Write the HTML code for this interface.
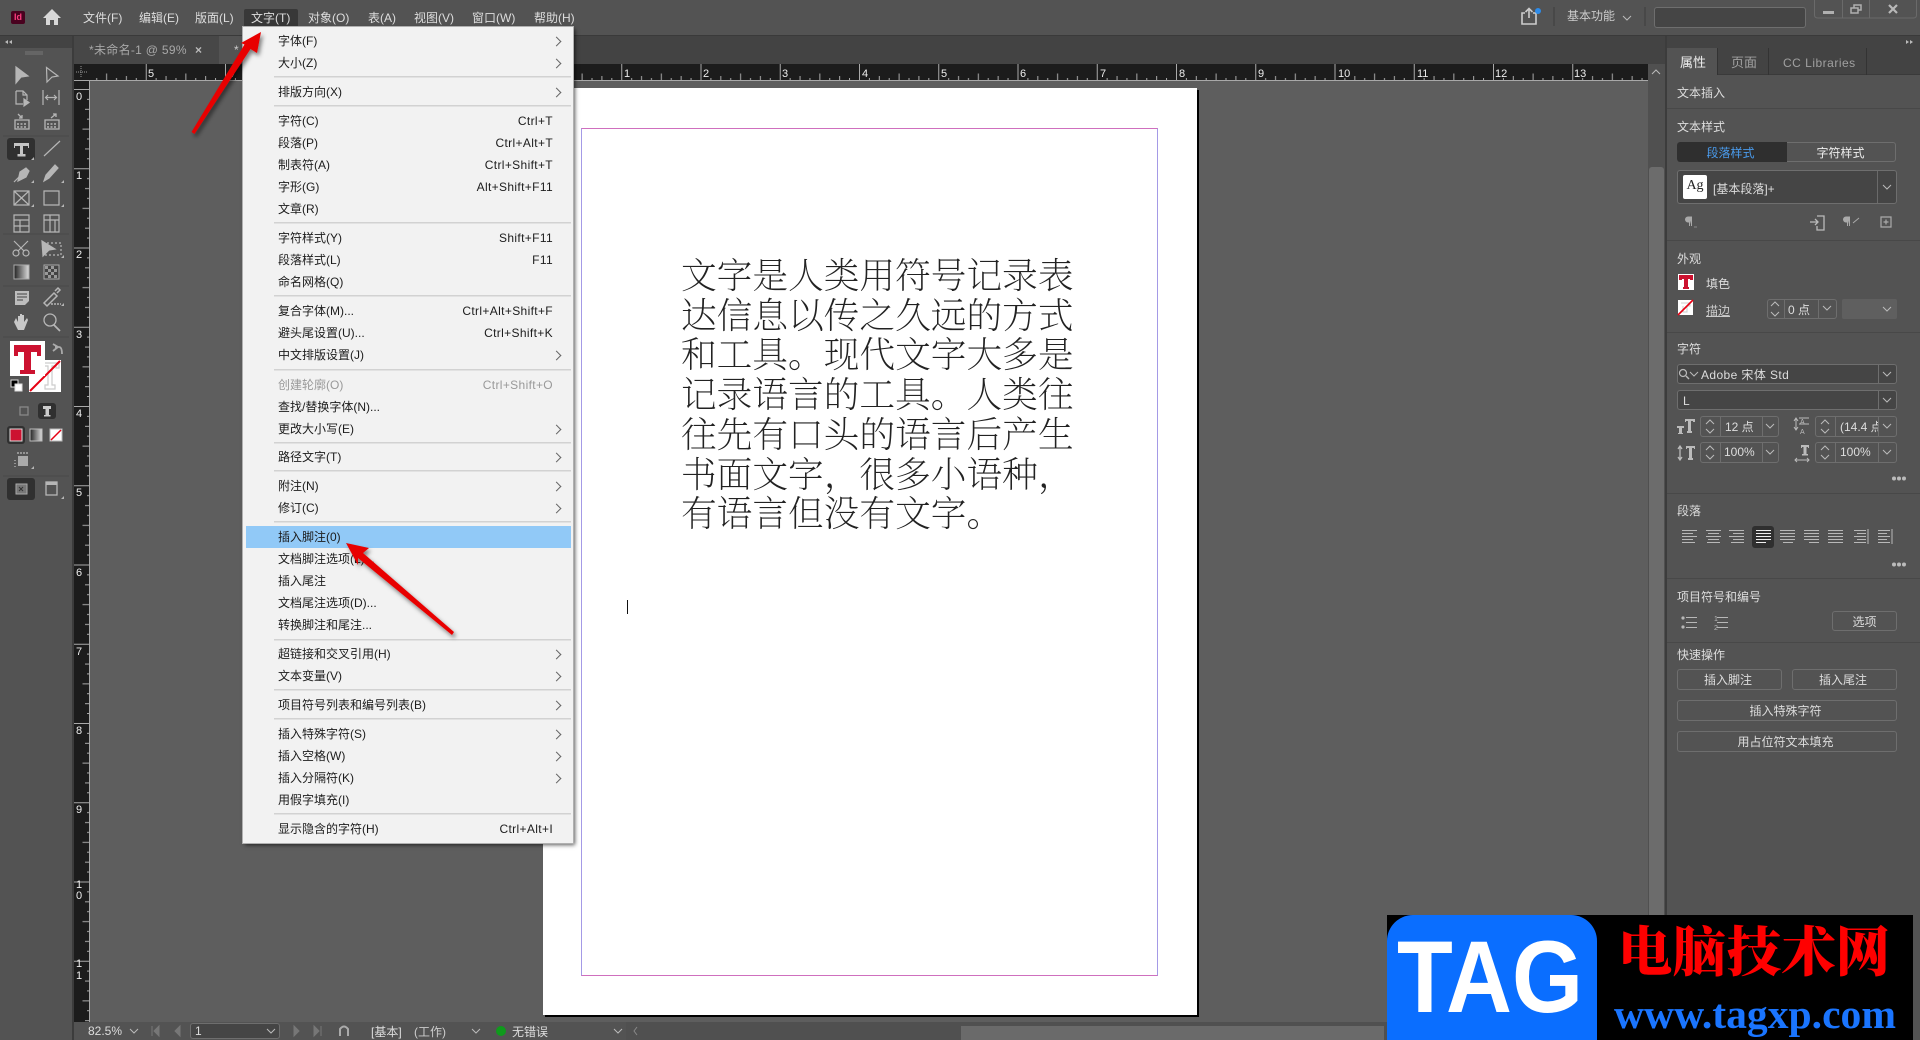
<!DOCTYPE html>
<html lang="zh-CN"><head><meta charset="utf-8"><title>InDesign</title>
<style>
html,body{margin:0;padding:0;width:1920px;height:1040px;overflow:hidden;background:#5e5e5e}
body{position:relative;font:12px/18px "Liberation Sans","Noto Sans CJK SC",sans-serif;color:#ddd}
.a{position:absolute;white-space:nowrap}
.t{position:absolute;white-space:nowrap;line-height:18px}
#menu{position:absolute;left:243px;top:27px;width:330px;height:816px;background:#f2f2f2;box-shadow:2px 2px 4px rgba(0,0,0,.65);outline:1px solid #b0b0b0;color:#1c1c1c}
#menu .m{position:absolute;left:35px;white-space:nowrap;line-height:18px}
#menu .k{position:absolute;right:20px;white-space:nowrap;line-height:18px;letter-spacing:.35px}
#menu .s{position:absolute;left:31px;width:297px;height:1px;background:#d2d2d2;border-bottom:1px solid #e2e2e2}
#menu .r{position:absolute;left:310px;width:6px;height:6px;border-top:1px solid #666;border-right:1px solid #666;transform:rotate(45deg)}
.d{color:#999!important}
.bx{position:absolute;box-sizing:border-box;border:1px solid #6e6e6e;border-radius:3px}
.btn{position:absolute;box-sizing:border-box;border:1px solid #6e6e6e;border-radius:3px;text-align:center;line-height:20px;padding-left:0;color:#ddd}
.sep{position:absolute;left:1667px;width:253px;height:1px;background:#484848}
.body{font-family:"Noto Serif CJK SC",serif;font-weight:200;font-size:35.7px;line-height:39.7px;color:#222}
</style></head><body>

<!-- top bar -->
<div class="a" style="left:0;top:0;width:1920px;height:35px;background:#535353"></div>
<div class="a" style="left:0;top:35px;width:1920px;height:1px;background:#3a3a3a"></div>
<div class="a" style="left:11px;top:11px;width:14px;height:13px;background:#49021f;border-radius:2px;color:#ff3d7f;font:bold 9px/13px 'Liberation Sans',sans-serif;text-align:center">Id</div>
<div class="a" style="left:244px;top:9px;width:54px;height:18px;background:#383838;border-radius:2px 2px 0 0"></div>
<span class="t" style="left:83px;top:9px">文件(F)</span>
<span class="t" style="left:139px;top:9px">编辑(E)</span>
<span class="t" style="left:195px;top:9px">版面(L)</span>
<span class="t" style="left:251px;top:9px">文字(T)</span>
<span class="t" style="left:308px;top:9px">对象(O)</span>
<span class="t" style="left:368px;top:9px">表(A)</span>
<span class="t" style="left:414px;top:9px">视图(V)</span>
<span class="t" style="left:472px;top:9px">窗口(W)</span>
<span class="t" style="left:534px;top:9px">帮助(H)</span>
<span class="t" style="left:1567px;top:7px;color:#ccc">基本功能</span>
<div class="bx" style="left:1654px;top:7px;width:152px;height:21px;background:#454545"></div>

<!-- tab bar -->
<div class="a" style="left:73px;top:36px;width:1593px;height:28px;background:#434343"></div>
<div class="a" style="left:73px;top:36px;width:146px;height:28px;background:#474747"></div>
<div class="a" style="left:219px;top:36px;width:60px;height:28px;background:#535353"></div>
<span class="t" style="left:89px;top:41px;color:#a8a8a8;letter-spacing:.3px">*未命名-1 @ 59%</span>
<span class="t" style="left:195px;top:41px;color:#bbb;font-weight:bold">×</span>
<span class="t" style="left:234px;top:41px;color:#ccc">*</span>

<!-- left panel -->
<div class="a" style="left:0;top:36px;width:72px;height:1004px;background:#535353"></div>
<div class="a" style="left:0;top:36px;width:72px;height:12px;background:#434343"></div>
<div class="a" style="left:72px;top:36px;width:2px;height:1004px;background:#3c3c3c"></div>
<div class="a" style="left:7px;top:138px;width:28px;height:22px;background:#303030;border-radius:3px"></div>
<div class="a" style="left:7px;top:426px;width:18px;height:18px;background:#303030;border-radius:3px"></div>
<div class="a" style="left:7px;top:478px;width:28px;height:22px;background:#303030;border-radius:3px"></div>
<div class="a" style="left:38px;top:403px;width:18px;height:16px;background:#303030;border-radius:3px"></div>

<!-- scrollbars -->
<div class="a" style="left:1648px;top:64px;width:17px;height:976px;background:#505050"></div>
<div class="a" style="left:1649px;top:167px;width:15px;height:778px;background:#6c6c6c;border-radius:3px 3px 0 0"></div>
<div class="a" style="left:1665px;top:36px;width:2px;height:1004px;background:#3c3c3c"></div>

<!-- page -->
<div class="a" style="left:543px;top:88px;width:654px;height:927px;background:#fff;box-shadow:2px 2px 0 #000"></div>
<div class="a" style="left:581px;top:128px;width:577px;height:848px;box-sizing:border-box;border-top:1px solid #cf6fbe;border-bottom:1px solid #cf6fbe;border-left:1px solid #a49ae6;border-right:1px solid #a49ae6"></div>
<div class="a body" style="left:681px;top:254px;width:400px">
文字是人类用符号记录表<br>达信息以传之久远的方式<br>和工具。现代文字大多是<br>记录语言的工具。人类往<br>往先有口头的语言后产生<br>书面文字，很多小语种，<br>有语言但没有文字。
</div>
<div class="a" style="left:627px;top:600px;width:1px;height:14px;background:#111"></div>

<!-- status bar -->
<div class="a" style="left:74px;top:1022px;width:1591px;height:18px;background:#535353"></div>
<div class="a" style="left:626px;top:1022px;width:1039px;height:18px;background:#505050"></div>
<div class="a" style="left:961px;top:1026px;width:423px;height:14px;background:#6a6a6a"></div>
<div class="bx" style="left:190px;top:1023px;width:90px;height:16px;background:#454545"></div>
<span class="t" style="left:88px;top:1022px">82.5%</span>
<span class="t" style="left:195px;top:1022px">1</span>
<span class="t" style="left:371px;top:1023px">[基本]</span>
<span class="t" style="left:414px;top:1023px;color:#ccc">(工作)</span>
<span class="t" style="left:512px;top:1023px">无错误</span>

<!-- right panel -->
<div class="a" style="left:1667px;top:36px;width:253px;height:1004px;background:#535353"></div>
<div class="a" style="left:1667px;top:36px;width:253px;height:12px;background:#434343"></div>
<div class="a" style="left:1667px;top:48px;width:253px;height:27px;background:#434343;border-bottom:1px solid #3a3a3a;box-sizing:border-box"></div>
<div class="a" style="left:1667px;top:48px;width:51px;height:27px;background:#535353;border-right:1px solid #333;box-sizing:border-box"></div>
<div class="a" style="left:1768px;top:48px;width:1px;height:27px;background:#333"></div>
<div class="a" style="left:1866px;top:48px;width:1px;height:27px;background:#333"></div>
<span class="t" style="left:1680px;top:54px;font-size:13px;color:#eee">属性</span>
<span class="t" style="left:1731px;top:54px;font-size:13px;color:#a0a0a0">页面</span>
<span class="t" style="left:1783px;top:54px;color:#a0a0a0;letter-spacing:.5px">CC Libraries</span>
<span class="t" style="left:1677px;top:84px">文本插入</span>
<div class="sep" style="top:108px"></div>
<span class="t" style="left:1677px;top:118px">文本样式</span>
<div class="bx" style="left:1677px;top:142px;width:219px;height:20px"></div>
<div class="a" style="left:1677px;top:142px;width:110px;height:20px;background:#2f2f2f;border-radius:3px 0 0 3px;text-align:center;line-height:22px;color:#4a9bec;text-indent:-3px">段落样式</div>
<div class="a" style="left:1787px;top:142px;width:109px;text-align:center;line-height:22px;color:#eee;text-indent:-2px">字符样式</div>
<div class="bx" style="left:1677px;top:170px;width:220px;height:34px;background:#454545"></div>
<div class="a" style="left:1877px;top:171px;width:1px;height:32px;background:#6a6a6a"></div>
<div class="a" style="left:1683px;top:175px;width:24px;height:24px;background:#fff;border-radius:2px;color:#222;font:14px/22px 'Liberation Serif',serif;text-align:center">Ag</div>
<span class="t" style="left:1713px;top:180px">[基本段落]+</span>
<div class="sep" style="top:240px"></div>
<span class="t" style="left:1677px;top:250px">外观</span>
<span class="t" style="left:1706px;top:275px">填色</span>
<span class="t" style="left:1706px;top:302px;text-decoration:underline;color:#ccc">描边</span>
<div class="bx" style="left:1767px;top:299px;width:70px;height:20px"></div>
<div class="a" style="left:1784px;top:300px;width:1px;height:18px;background:#6e6e6e"></div>
<div class="a" style="left:1818px;top:300px;width:1px;height:18px;background:#6e6e6e"></div>
<span class="t" style="left:1788px;top:301px">0 点</span>
<div class="a" style="left:1842px;top:299px;width:55px;height:20px;background:#5f5f5f;border-radius:2px"></div>
<div class="sep" style="top:332px"></div>
<span class="t" style="left:1677px;top:340px">字符</span>
<div class="bx" style="left:1677px;top:364px;width:220px;height:20px;background:#454545"></div>
<div class="a" style="left:1878px;top:365px;width:1px;height:18px;background:#6e6e6e"></div>
<span class="t" style="left:1701px;top:366px;letter-spacing:.4px">Adobe 宋体 Std</span>
<div class="bx" style="left:1677px;top:390px;width:220px;height:20px;background:#454545"></div>
<div class="a" style="left:1878px;top:391px;width:1px;height:18px;background:#6e6e6e"></div>
<span class="t" style="left:1683px;top:392px">L</span>
<div class="bx" style="left:1700px;top:416px;width:79px;height:21px"></div>
<div class="a" style="left:1720px;top:417px;width:1px;height:19px;background:#6e6e6e"></div>
<div class="a" style="left:1762px;top:417px;width:1px;height:19px;background:#6e6e6e"></div>
<span class="t" style="left:1725px;top:418px">12 点</span>
<div class="bx" style="left:1815px;top:416px;width:82px;height:21px"></div>
<div class="a" style="left:1835px;top:417px;width:1px;height:19px;background:#6e6e6e"></div>
<div class="a" style="left:1878px;top:417px;width:1px;height:19px;background:#6e6e6e"></div>
<span class="t" style="left:1840px;top:418px;width:38px;overflow:hidden">(14.4 点)</span>
<div class="bx" style="left:1700px;top:442px;width:79px;height:21px"></div>
<div class="a" style="left:1720px;top:443px;width:1px;height:19px;background:#6e6e6e"></div>
<div class="a" style="left:1762px;top:443px;width:1px;height:19px;background:#6e6e6e"></div>
<span class="t" style="left:1724px;top:443px">100%</span>
<div class="bx" style="left:1815px;top:442px;width:82px;height:21px"></div>
<div class="a" style="left:1835px;top:443px;width:1px;height:19px;background:#6e6e6e"></div>
<div class="a" style="left:1878px;top:443px;width:1px;height:19px;background:#6e6e6e"></div>
<span class="t" style="left:1840px;top:443px">100%</span>
<div class="sep" style="top:493px"></div>
<span class="t" style="left:1677px;top:502px">段落</span>
<div class="a" style="left:1752px;top:526px;width:22px;height:22px;background:#2f2f2f;border-radius:3px"></div>
<div class="sep" style="top:578px"></div>
<span class="t" style="left:1677px;top:588px">项目符号和编号</span>
<div class="btn" style="left:1832px;top:611px;width:65px;height:20px">选项</div>
<div class="sep" style="top:642px"></div>
<span class="t" style="left:1677px;top:646px">快速操作</span>
<div class="btn" style="left:1677px;top:669px;width:105px;height:21px;text-indent:-3px">插入脚注</div>
<div class="btn" style="left:1792px;top:669px;width:105px;height:21px;text-indent:-3px">插入尾注</div>
<div class="btn" style="left:1677px;top:700px;width:220px;height:21px;text-indent:-3px">插入特殊字符</div>
<div class="btn" style="left:1677px;top:731px;width:220px;height:21px;text-indent:-3px">用占位符文本填充</div>

<!-- icon + ruler layer -->
<svg class="a" style="left:0;top:0" width="1920" height="1040" viewBox="0 0 1920 1040" font-family="Liberation Sans,sans-serif">
<defs>
<path id="cv" d="M-4-2L0 2L4-2" fill="none" stroke="#bbb" stroke-width="1"/>
<path id="cu" d="M-4 2L0-2L4 2" fill="none" stroke="#bbb" stroke-width="1"/>
<pattern id="pt" patternUnits="userSpaceOnUse" width="79.25" height="16" x="542" y="64">
<path d="M.5 0V16M10.4 14V16M20.3 12V16M30.2 14V16M40.1 9.500V16M50 14V16M59.9 12V16M69.8 14V16" stroke="#aaa" stroke-width="1" fill="none"/>
</pattern>
<pattern id="pl" patternUnits="userSpaceOnUse" width="15" height="79.25" x="74" y="89">
<path d="M0 .5H15M13 10.400H15M11 20.300H15M13 30.200H15M8.500 40.100H15M13 50H15M11 59.900H15M13 69.800H15" stroke="#aaa" stroke-width="1" fill="none"/>
</pattern>
</defs>

<!-- rulers -->
<rect x="74" y="64" width="1574" height="16" fill="#1c1c1c"/>
<rect x="89" y="64" width="1559" height="16" fill="url(#pt)"/>
<rect x="74" y="80" width="1574" height="1" fill="#a8a8a8"/>
<rect x="74" y="81" width="15" height="941" fill="#1c1c1c"/>
<rect x="74" y="81" width="15" height="941" fill="url(#pl)"/>
<rect x="89" y="81" width="1" height="941" fill="#a8a8a8"/>
<path d="M81 66V78M76 72H88" stroke="#999" stroke-dasharray="1 1" fill="none"/>
<g fill="#eee" font-size="11">
<text x="148" y="77">5</text><text x="228" y="77">4</text>
<text x="624" y="77">1</text><text x="703" y="77">2</text><text x="782" y="77">3</text><text x="862" y="77">4</text><text x="941" y="77">5</text><text x="1020" y="77">6</text><text x="1100" y="77">7</text><text x="1179" y="77">8</text><text x="1258" y="77">9</text><text x="1338" y="77">10</text><text x="1417" y="77">11</text><text x="1495" y="77">12</text><text x="1574" y="77">13</text>
<text x="76" y="100">0</text><text x="76" y="179">1</text><text x="76" y="258">2</text><text x="76" y="338">3</text><text x="76" y="417">4</text><text x="76" y="496">5</text><text x="76" y="576">6</text><text x="76" y="655">7</text><text x="76" y="734">8</text><text x="76" y="813">9</text>
<text x="76" y="888">1</text><text x="76" y="899">0</text><text x="76" y="967">1</text><text x="76" y="979">1</text>
</g>

<!-- home / share / window -->
<path d="M52 9L61 18H58V25H54V20H50V25H46V18H43Z" fill="#d8d8d8"/>
<path d="M1525 13H1522V24H1536V13H1533M1529 18V9M1525.500 12L1529 8.500L1532.500 12" fill="none" stroke="#ccc" stroke-width="1.600"/>
<circle cx="1538" cy="11" r="3" fill="#2d8ceb"/>
<rect x="1553" y="7" width="2" height="19" fill="#484848"/><rect x="1644" y="7" width="2" height="19" fill="#484848"/>
<use href="#cv" x="1627" y="18"/>
<path d="M1814.500 0V15Q1814.500 18 1818 18H1913.500Q1916.500 18 1916.500 15V0M1842.500 0V18M1869.500 0V18" fill="none" stroke="#6a6a6a"/>
<rect x="1823" y="11" width="11" height="3" fill="#b0b0b0"/>
<path d="M1851 8H1858V13H1851ZM1854 8V5H1861V10H1858" fill="none" stroke="#b0b0b0" stroke-width="1.500"/>
<path d="M1889 5L1897 13M1897 5L1889 13" stroke="#b8b8b8" stroke-width="2.200" fill="none"/>

<!-- panel grips -->
<path d="M8 40L5 42L8 44ZM12 40L9 42L12 44Z" fill="#bbb"/>
<path d="M1906 40L1909 42L1906 44ZM1910 40L1913 42L1910 44Z" fill="#bbb"/>
<path d="M26 51V55M28 51V55M30 51V55M32 51V55M34 51V55M36 51V55M38 51V55M40 51V55M42 51V55" stroke="#777"/>

<!-- tools -->
<g fill="none" stroke="#b6b6b6" stroke-width="1.200">
<path d="M16 67L28 76L21 77L16 83Z" fill="#b6b6b6"/>
<path d="M46.500 67.500L58 76L52 77L47 82Z"/>
<path d="M16 91H23L27 95V100M16 91V104H23M23 91V95H27"/><path d="M24 99L29 102.500L24 106Z" fill="#b6b6b6"/>
<path d="M43 90V105M59 90V105M46 97.500H56M48 95L45.500 97.500L48 100M54 95L56.500 97.500L54 100"/>
<path d="M15 120H29V129H15ZM18 114L22 118M22 115V118H19" stroke-width="1.300"/><path d="M17 124H27M17 127H27" stroke-dasharray="2 1.500" stroke-width="1.500"/>
<path d="M45 120H59V129H45ZM51 118L56 114M53 114H56V117" stroke-width="1.300"/><path d="M47 124H57M47 127H57" stroke-dasharray="2 1.500" stroke-width="1.500"/>
<path d="M44 156L60 141"/>
<path d="M18 181L20 172L26 168L29 171L26 177Z" fill="#b6b6b6"/><path d="M14 182L19 177"/>
<path d="M44 181L46 175L55 165L58 168L49 178Z" fill="#b6b6b6"/>
<path d="M14 191H29V205H14ZM14 191L29 205M29 191L14 205"/>
<path d="M44 191H59V205H44Z"/>
<path d="M14 215H29V232H14ZM14 220H29M14 226H29M20 220V232"/>
<path d="M44 215H59V232H44ZM44 220H59M50 215V232M55 220V232"/>
<circle cx="16" cy="253" r="3"/><circle cx="26" cy="253" r="3"/><path d="M14 241L24 251M28 241L18 251"/>
<path d="M43 243H61V255H43" stroke-dasharray="2 2"/><path d="M42 241L55 249L49 250L43 256Z" fill="#b6b6b6"/>
</g>
<path d="M14 143H29V148H28V146H23V154H25.500V156.500H17.500V154H20V146H15V148H14Z" fill="#c4c4c4"/>
<defs><linearGradient id="g1"><stop offset="0" stop-color="#222"/><stop offset="1" stop-color="#ddd"/></linearGradient></defs>
<rect x="14" y="265" width="15" height="14" fill="url(#g1)" stroke="#aaa"/>
<rect x="44" y="265" width="15" height="14" fill="#444" stroke="#aaa"/>
<path d="M45 266h3v3h-3zM51 266h3v3h-3zM48 269h3v3h-3zM54 269h3v3h-3zM45 272h3v3h-3zM51 272h3v3h-3zM48 275h3v3h-3zM54 275h3v3h-3z" fill="#999"/>
<path d="M15 291H29V301L25 305H15Z" fill="#bdbdbd"/><path d="M17 294H27M17 297H27M17 300H23" stroke="#444"/>
<path d="M44 303L54 293L57 296L47 306ZM55 291L58 288L60 290L57 293" fill="none" stroke="#b6b6b6" stroke-width="1.500"/><path d="M51 304H61" stroke="#b6b6b6" stroke-width="1.500" stroke-dasharray="2 1"/>
<path d="M14 322L16 318L18 322V316H20V321V314H22V321V315H24V322L27 318L28 320L24 330H18Z" fill="#c8c8c8"/>
<circle cx="50" cy="320" r="6" fill="none" stroke="#b6b6b6" stroke-width="1.300"/><path d="M54 325L60 331" stroke="#b6b6b6" stroke-width="1.800"/>
<path d="M34 160V157L31 160ZM34 183V180L31 183ZM64 183V180L61 183ZM34 207V204L31 207ZM64 207V204L61 207ZM64 258V255L61 258ZM64 306V303L61 306ZM34 469V466L31 469ZM64 499V496L61 499Z" fill="#b6b6b6"/>
<!-- stroke swatch below fill swatch -->
<rect x="29" y="360" width="32" height="32" fill="#fff"/>
<path d="M41 363H59V368H56V366H52V385H55V389H45V385H48V366H44V368H41Z" fill="none" stroke="#ccc" stroke-width="1.200"/>
<path d="M30 391L60 361" stroke="#e60012" stroke-width="2"/>
<rect x="10" y="341" width="35" height="35" fill="#fff"/>
<path d="M14 345H41V356H37V352H31V370H35V374H20V370H24V352H18V356H14Z" fill="#cc1230"/>
<path d="M56 342L61 345L56 349M58 345H62Q65 345 65 352" fill="none" stroke="#aaa" stroke-width="1.800" transform="translate(-3 2)"/>
<rect x="11" y="380" width="7" height="7" fill="#000" stroke="#ddd"/><rect x="15" y="384" width="7" height="7" fill="#fff" stroke="#ddd"/>
<rect x="20" y="407" width="8" height="8" fill="none" stroke="#888" stroke-width="1.300"/>
<path d="M43 406H51V409H49V415H50.500V416.500H44V415H45.500V409H43Z" fill="#ccc"/>
<rect x="10" y="429" width="12" height="12" fill="#cc1230" stroke="#ddd"/>
<rect x="30" y="429" width="12" height="12" fill="url(#g1)" stroke="#bbb"/>
<rect x="50" y="429" width="12" height="12" fill="#fff" stroke="#bbb"/><path d="M51 440L61 430" stroke="#e60012" stroke-width="1.500"/>
<rect x="18" y="456" width="10" height="10" fill="#aaa"/><path d="M15 460V461M15 463V464M15 466V467M18 452V454M21 452V454M24 452V454M27 452V454" stroke="#aaa" stroke-width="1.500"/>
<rect x="16" y="484" width="11" height="10" fill="#777" stroke="#aaa"/><path d="M19 487L23 491M23 487L19 491" stroke="#333"/>
<rect x="46" y="482" width="11" height="13" fill="none" stroke="#b6b6b6" stroke-width="1.300"/><rect x="46" y="482" width="11" height="3" fill="#b6b6b6"/>
<path d="M3 136H69M3 234H69M3 286H69M3 337H69M3 476H69" stroke="#484848"/>

<!-- status icons -->
<use href="#cv" x="134" y="1031"/><use href="#cv" x="271" y="1031"/><use href="#cv" x="476" y="1031"/><use href="#cv" x="618" y="1031"/>
<path d="M152 1026V1036M159 1026L154 1031L159 1036ZM180 1026L175 1031L180 1036Z" fill="#777" stroke="#777"/>
<path d="M294 1026L299 1031L294 1036ZM314 1026L319 1031L314 1036ZM321 1026V1036" fill="#777" stroke="#777"/>
<path d="M340 1036V1029Q344 1024 348 1029V1036" fill="none" stroke="#aaa" stroke-width="2"/>
<circle cx="501" cy="1031" r="5" fill="#0f9a1c"/>
<path d="M637 1027L634 1031L637 1035" stroke="#888" fill="none"/>
<use href="#cu" x="1656" y="72"/>

<!-- right panel icons -->
<use href="#cv" x="1887" y="187"/>
<path d="M1692 217H1688A2.500 2.500 0 0 0 1688 222H1689.500V226M1691.500 217V226" fill="#aaa" stroke="#aaa"/>
<path d="M1694 227H1697" stroke="#888"/>
<path d="M1810 222H1818M1815 219L1818 222L1815 225M1817 216H1824V230H1817V226" fill="none" stroke="#bbb" stroke-width="1.300"/>
<path d="M1850 217H1846A2.500 2.500 0 0 0 1846 222H1847.500V226M1849.500 217V226" fill="#aaa" stroke="#aaa"/><path d="M1853 223L1859 218" stroke="#aaa"/>
<path d="M1881 217H1891V227H1881ZM1883.500 222H1888.500M1886 219.500V224.500" fill="none" stroke="#aaa" stroke-width="1.200"/>
<rect x="1678" y="274" width="16" height="16" fill="#fff"/><path d="M1679 275H1693V280H1690V279H1688V287H1689V289H1683V287H1684V279H1682V280H1679Z" fill="#cc1230"/>
<rect x="1678" y="300" width="15" height="15" fill="#fff"/><path d="M1681 303H1690V306H1687V312H1683V306" fill="none" stroke="#ccc"/><path d="M1678 315L1693 300" stroke="#e60012" stroke-width="1.600"/>
<use href="#cu" x="1775" y="304"/><use href="#cv" x="1775" y="314"/><use href="#cv" x="1827" y="308"/><use href="#cv" x="1887" y="309"/>
<use href="#cv" x="1887" y="374"/><use href="#cv" x="1887" y="400"/>
<circle cx="1683" cy="373" r="3.500" fill="none" stroke="#bbb" stroke-width="1.200"/><path d="M1686 376L1689 379" stroke="#bbb" stroke-width="1.400"/><use href="#cv" x="1694" y="374"/>
<use href="#cu" x="1710" y="422"/><use href="#cv" x="1710" y="431"/><use href="#cv" x="1770" y="426"/>
<use href="#cu" x="1825" y="422"/><use href="#cv" x="1825" y="431"/><use href="#cv" x="1887" y="426"/>
<use href="#cu" x="1710" y="448"/><use href="#cv" x="1710" y="457"/><use href="#cv" x="1770" y="452"/>
<use href="#cu" x="1825" y="448"/><use href="#cv" x="1825" y="457"/><use href="#cv" x="1887" y="452"/>
<g fill="#bbb">
<path d="M1677 426H1684V428H1682V433H1683V434H1678V433H1679V428H1677ZM1685 419H1695V422H1693V421H1691V431H1692V433H1687V431H1688V421H1686V422H1685Z"/>
<path d="M1686 446H1695V449H1694V448H1692V458H1693V460H1688V458H1689V448H1687V449H1686Z"/>
<path d="M1680 447V459M1678 449L1680 446L1682 449M1678 457L1680 460L1682 457" fill="none" stroke="#bbb" stroke-width="1.300"/>
<path d="M1801 445H1809V448H1808V447H1806.500V454H1808V455.500H1802V454H1803.500V447H1802V448H1801Z"/>
<path d="M1795 460H1809M1797 458L1795 460L1797 462M1807 458L1809 460L1807 462" fill="none" stroke="#bbb"/>
<path d="M1796 419V429M1794 421L1796 418L1798 421M1794 427L1796 430L1798 427" fill="none" stroke="#bbb"/>
<path d="M1799 418H1809M1799 424H1809" fill="none" stroke="#bbb"/>
</g>
<text x="1800" y="424" font-size="7" fill="#bbb">A</text><text x="1800" y="434" font-size="7" fill="#bbb">A</text>
<g fill="#bbb"><circle cx="1894" cy="478.500" r="2"/><circle cx="1899" cy="478.500" r="2"/><circle cx="1904" cy="478.500" r="2"/><circle cx="1894" cy="564.500" r="2"/><circle cx="1899" cy="564.500" r="2"/><circle cx="1904" cy="564.500" r="2"/></g>
<g stroke="#b8b8b8" fill="none">
<path d="M1682 530.500H1697M1682 533.500H1693M1682 536.500H1697M1682 539.500H1693M1682 542.500H1695"/>
<path d="M1706 530.500H1721M1708 533.500H1719M1706 536.500H1721M1708 539.500H1719M1707 542.500H1720"/>
<path d="M1729 530.500H1744M1733 533.500H1744M1729 536.500H1744M1733 539.500H1744M1731 542.500H1744"/>
<path d="M1756 530.500H1771M1756 533.500H1771M1756 536.500H1771M1756 539.500H1771M1756 542.500H1766" stroke="#eee"/>
<path d="M1780 530.500H1795M1780 533.500H1795M1780 536.500H1795M1780 539.500H1795M1783 542.500H1793"/>
<path d="M1804 530.500H1819M1804 533.500H1819M1804 536.500H1819M1804 539.500H1819M1809 542.500H1819"/>
<path d="M1828 530.500H1843M1828 533.500H1843M1828 536.500H1843M1828 539.500H1843M1828 542.500H1843"/>
<path d="M1854 530.500H1866M1857 533.500H1866M1854 536.500H1866M1857 539.500H1866M1854 542.500H1866M1868 529V544"/>
<path d="M1878 530.500H1890M1878 533.500H1887M1878 536.500H1890M1878 539.500H1887M1878 542.500H1890M1892 529V544"/>
<path d="M1686 617.500H1697M1686 622.500H1697M1686 627.500H1697M1717 617.500H1728M1717 622.500H1728M1717 627.500H1728"/>
</g>
<circle cx="1683" cy="618" r="1.600" fill="#b8b8b8"/><circle cx="1683" cy="627" r="1.600" fill="#b8b8b8"/>
<text x="1714" y="621" font-size="7" fill="#b8b8b8">1</text><text x="1714" y="630" font-size="7" fill="#b8b8b8">2</text>

<!-- watermark -->
<rect x="1387" y="915" width="526" height="125" fill="#000"/>
<rect x="1387" y="915" width="210" height="150" rx="26" fill="#0a6eff"/>
<text x="1397" y="1012" font-family="Liberation Sans,sans-serif" font-weight="bold" font-size="102" fill="#fff" textLength="186" lengthAdjust="spacingAndGlyphs">TAG</text>
<text x="1618" y="971" font-family="Noto Serif CJK SC,serif" font-weight="900" font-size="54" fill="#ff0000" textLength="272" lengthAdjust="spacingAndGlyphs">电脑技术网</text>
<text x="1614" y="1028" font-family="Liberation Serif,serif" font-weight="bold" font-size="41" fill="#1a75ff" textLength="282" lengthAdjust="spacingAndGlyphs">www.tagxp.com</text>
</svg>

<!-- menu -->
<div id="menu">
<div class="m" style="top:5px">字体(F)</div><i class="r" style="top:11px"></i>
<div class="m" style="top:27px">大小(Z)</div><i class="r" style="top:33px"></i>
<div class="s" style="top:49px"></div>
<div class="m" style="top:56px">排版方向(X)</div><i class="r" style="top:62px"></i>
<div class="s" style="top:78px"></div>
<div class="m" style="top:85px">字符(C)</div><div class="k" style="top:85px">Ctrl+T</div>
<div class="m" style="top:107px">段落(P)</div><div class="k" style="top:107px">Ctrl+Alt+T</div>
<div class="m" style="top:129px">制表符(A)</div><div class="k" style="top:129px">Ctrl+Shift+T</div>
<div class="m" style="top:151px">字形(G)</div><div class="k" style="top:151px">Alt+Shift+F11</div>
<div class="m" style="top:173px">文章(R)</div>
<div class="s" style="top:195px"></div>
<div class="m" style="top:202px">字符样式(Y)</div><div class="k" style="top:202px">Shift+F11</div>
<div class="m" style="top:224px">段落样式(L)</div><div class="k" style="top:224px">F11</div>
<div class="m" style="top:246px">命名网格(Q)</div>
<div class="s" style="top:268px"></div>
<div class="m" style="top:275px">复合字体(M)...</div><div class="k" style="top:275px">Ctrl+Alt+Shift+F</div>
<div class="m" style="top:297px">避头尾设置(U)...</div><div class="k" style="top:297px">Ctrl+Shift+K</div>
<div class="m" style="top:319px">中文排版设置(J)</div><i class="r" style="top:325px"></i>
<div class="s" style="top:342px"></div>
<div class="m d" style="top:349px">创建轮廓(O)</div><div class="k d" style="top:349px">Ctrl+Shift+O</div>
<div class="m" style="top:371px">查找/替换字体(N)...</div>
<div class="m" style="top:393px">更改大小写(E)</div><i class="r" style="top:399px"></i>
<div class="s" style="top:415px"></div>
<div class="m" style="top:421px">路径文字(T)</div><i class="r" style="top:427px"></i>
<div class="s" style="top:443px"></div>
<div class="m" style="top:450px">附注(N)</div><i class="r" style="top:456px"></i>
<div class="m" style="top:472px">修订(C)</div><i class="r" style="top:478px"></i>
<div class="s" style="top:494px"></div>
<div class="a" style="left:3px;top:499px;width:325px;height:22px;background:#91c9f7"></div>
<div class="m" style="top:501px">插入脚注(0)</div>
<div class="m" style="top:523px">文档脚注选项(L)...</div>
<div class="m" style="top:545px">插入尾注</div>
<div class="m" style="top:567px">文档尾注选项(D)...</div>
<div class="m" style="top:589px">转换脚注和尾注...</div>
<div class="s" style="top:612px"></div>
<div class="m" style="top:618px">超链接和交叉引用(H)</div><i class="r" style="top:624px"></i>
<div class="m" style="top:640px">文本变量(V)</div><i class="r" style="top:646px"></i>
<div class="s" style="top:662px"></div>
<div class="m" style="top:669px">项目符号列表和编号列表(B)</div><i class="r" style="top:675px"></i>
<div class="s" style="top:691px"></div>
<div class="m" style="top:698px">插入特殊字符(S)</div><i class="r" style="top:704px"></i>
<div class="m" style="top:720px">插入空格(W)</div><i class="r" style="top:726px"></i>
<div class="m" style="top:742px">插入分隔符(K)</div><i class="r" style="top:748px"></i>
<div class="m" style="top:764px">用假字填充(I)</div>
<div class="s" style="top:786px"></div>
<div class="m" style="top:793px">显示隐含的字符(H)</div><div class="k" style="top:793px">Ctrl+Alt+I</div>
</div>

<!-- annotation arrows -->
<svg class="a" style="left:0;top:0" width="1920" height="1040" viewBox="0 0 1920 1040">
<defs><filter id="sh" x="-30%" y="-30%" width="170%" height="170%"><feDropShadow dx="2" dy="3" stdDeviation="2" flood-color="#000" flood-opacity=".5"/></filter></defs>
<path d="M261 32L257 53L250.500 49L194.500 134L191.500 132L244.500 44.500L241 43Z" fill="#e80000" filter="url(#sh)"/>
<path d="M346 543L369 548L363 553L454 632L452 635L358 558L358 565Z" fill="#e80000" filter="url(#sh)"/>
</svg>
</body></html>
